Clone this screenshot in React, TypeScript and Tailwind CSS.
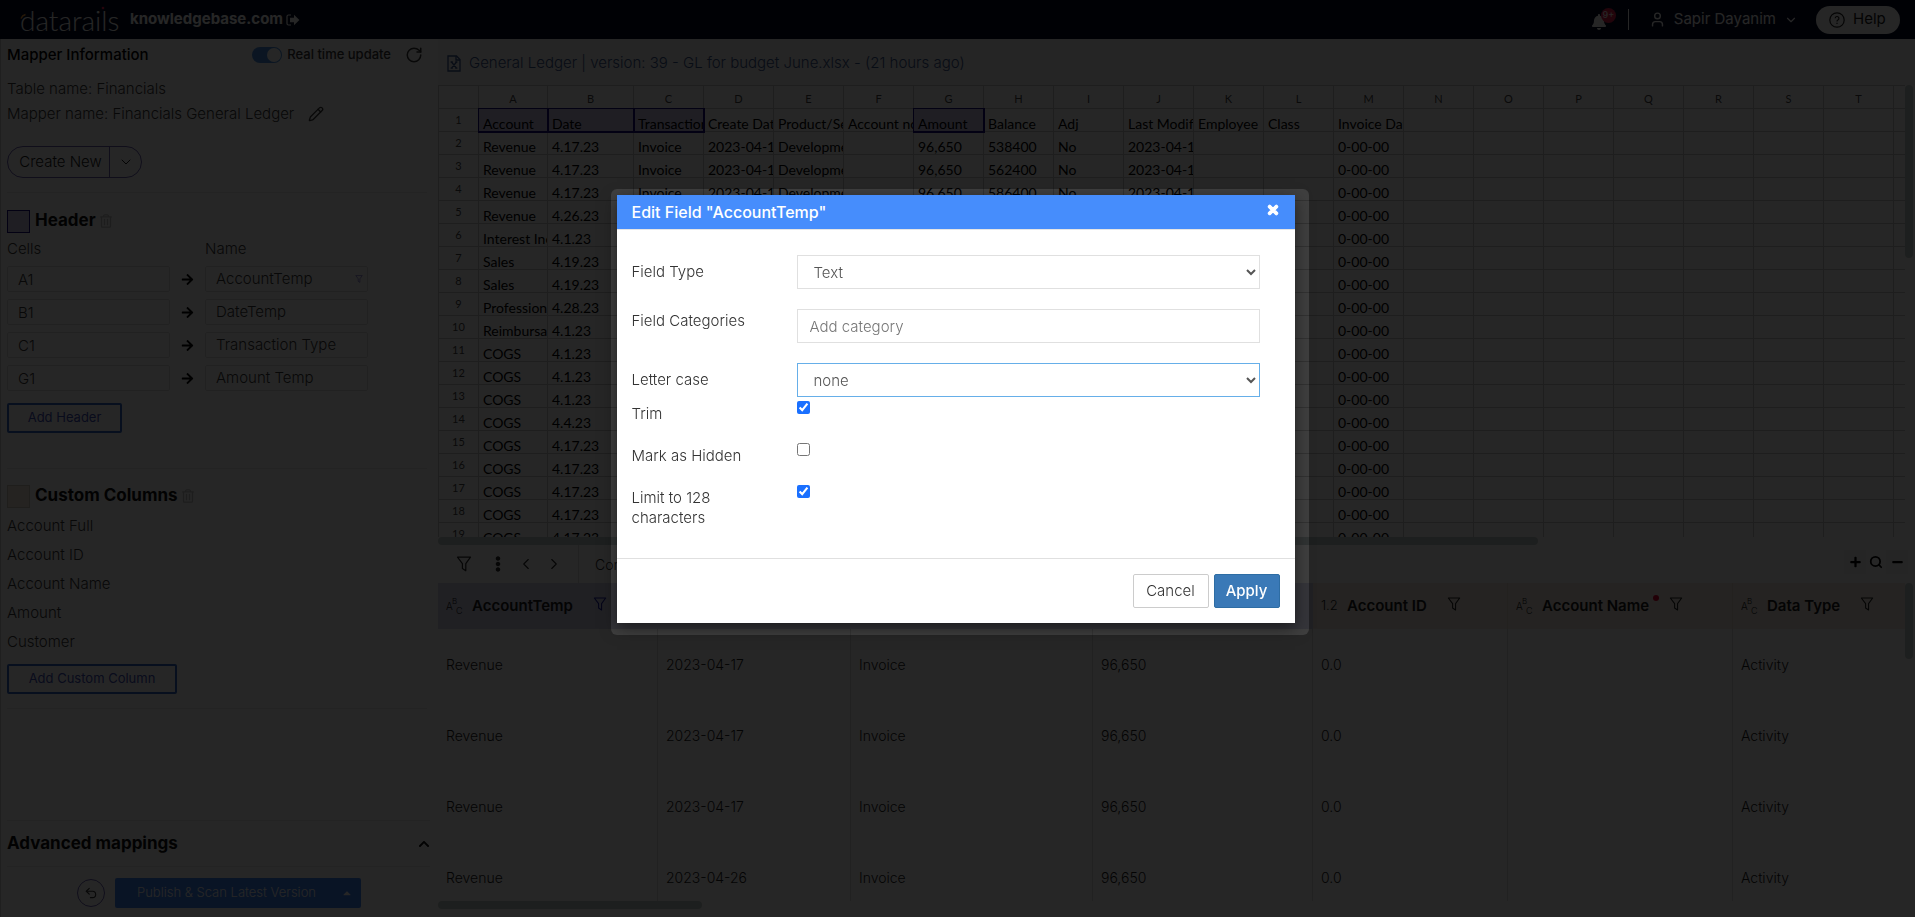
import React from "react";
import { ChevronDown, ChevronLeft, ChevronRight, Pencil, RotateCw, Search, Undo2, User } from "lucide-react";
import {
  FaArrowRight,
  FaBell,
  FaCaretUp,
  FaChevronUp,
  FaEllipsisV,
  FaMinus,
  FaPlus,
  FaRegTrashAlt,
  FaTimes,
} from "react-icons/fa";

const headerMappings = [
  { cell: "A1", name: "AccountTemp", filtered: true },
  { cell: "B1", name: "DateTemp" },
  { cell: "C1", name: "Transaction Type" },
  { cell: "G1", name: "Amount Temp" },
];

const customColumns = ["Account Full", "Account ID", "Account Name", "Amount", "Customer"];

const letters = "ABCDEFGHIJKLMNOPQRST".split("");
const selectedHeaders = ["A", "B", "C", "G"];

type SheetRow = Record<string, string>;

const invoice = (balance: string): SheetRow => ({
  A: "Revenue",
  B: "4.17.23",
  C: "Invoice",
  D: "2023-04-17",
  E: "Development",
  G: "96,650",
  H: balance,
  I: "No",
  J: "2023-04-17",
  M: "0-00-00",
});

const entry = (account: string, date: string): SheetRow => ({ A: account, B: date, M: "0-00-00" });

const sheetRows: SheetRow[] = [
  {
    A: "Account",
    B: "Date",
    C: "Transaction Type",
    D: "Create Date",
    E: "Product/Service",
    F: "Account no",
    G: "Amount",
    H: "Balance",
    I: "Adj",
    J: "Last Modified",
    K: "Employee",
    L: "Class",
    M: "Invoice Date",
  },
  invoice("538400"),
  invoice("562400"),
  invoice("586400"),
  entry("Revenue", "4.26.23"),
  entry("Interest Income", "4.1.23"),
  entry("Sales", "4.19.23"),
  entry("Sales", "4.19.23"),
  entry("Professional", "4.28.23"),
  entry("Reimbursable", "4.1.23"),
  entry("COGS", "4.1.23"),
  entry("COGS", "4.1.23"),
  entry("COGS", "4.1.23"),
  entry("COGS", "4.4.23"),
  entry("COGS", "4.17.23"),
  entry("COGS", "4.17.23"),
  entry("COGS", "4.17.23"),
  entry("COGS", "4.17.23"),
  entry("COGS", "4.17.23"),
];

const previewRows = [
  ["Revenue", "2023-04-17", "Invoice", "96,650", "0.0", "", "Activity"],
  ["Revenue", "2023-04-17", "Invoice", "96,650", "0.0", "", "Activity"],
  ["Revenue", "2023-04-17", "Invoice", "96,650", "0.0", "", "Activity"],
  ["Revenue", "2023-04-26", "Invoice", "96,650", "0.0", "", "Activity"],
];

function Funnel({ className }: { className: string }) {
  return (
    <svg viewBox="0 0 16 16" className={className} fill="none" stroke="currentColor" strokeWidth="1.2" strokeLinejoin="round" aria-hidden="true">
      <path d="M1.5 1.2h13L9.8 7.6v7.2L6.4 12.6v-5z" />
    </svg>
  );
}

function LeaveIcon() {
  return (
    <svg viewBox="0 0 14 12" className="h-3 w-3.5" aria-hidden="true">
      <path d="M5 1H2.5A1.5 1.5 0 0 0 1 2.5v7A1.5 1.5 0 0 0 2.5 11H5" fill="none" stroke="currentColor" strokeWidth="1.2" />
      <path d="M8 .8 13.4 6 8 11.2V8.200H4V3.800H8z" fill="currentColor" />
    </svg>
  );
}

function TextType() {
  return (
    <svg viewBox="0 0 18 18" className="h-[18px] w-[18px] shrink-0" fill="currentColor" fontFamily="Inter, sans-serif" fontWeight="300" aria-hidden="true">
      <text x="0" y="13" fontSize="10">A</text>
      <text x="6" y="7" fontSize="8">B</text>
      <text x="10" y="17" fontSize="9">C</text>
    </svg>
  );
}

function ExcelFile() {
  return (
    <svg viewBox="0 0 14 17" className="h-[17px] w-3.5" fill="none" stroke="currentColor" strokeWidth="1.3" aria-hidden="true">
      <path d="M1 1h8.5L13 4.5V16H1z" />
      <path d="M9 1v4h4" />
      <path d="M4.5 7 9.5 13.2M9.5 7 4.5 13.2M3.6 7h2.2M8.2 7h2.2M3.6 13.2h2.2M8.2 13.2h2.2" />
    </svg>
  );
}

function TopBar() {
  return (
    <header className="flex h-[39px] shrink-0 items-center bg-[#050b26] pr-[15px] pl-5 text-white">
      <a href="#" className="relative block w-[100px] font-[Lato,sans-serif] text-[28px] leading-[30px] font-light">
        datarails
        <svg viewBox="0 0 100 30" className="absolute top-0 left-0 h-[30px] w-[100px]" fill="none" aria-hidden="true">
          <path d="M1 13.5a7 7 0 0 1 4.500-4" stroke="#ffa033" strokeWidth="1.5" />
          <circle cx="83" cy="3" r="1.3" fill="#ff2050" />
        </svg>
      </a>
      <a href="#" className="ml-[10px] flex items-center gap-[3px] text-[15px] font-bold">
        knowledgebase.com
        <LeaveIcon />
      </a>
      <div className="ml-auto flex items-center">
        <button type="button" aria-label="Notifications" className="relative h-6 w-6">
          <FaBell className="mt-[5px] h-4 w-3.5" />
          <span className="absolute top-0 left-[9px] flex h-[15px] w-[15px] items-center justify-center rounded-full bg-[#e0204e] text-[9px] font-medium">9+</span>
        </button>
        <span className="mx-3 h-[21px] w-px bg-white" />
        <button type="button" className="ml-2 flex items-center text-[15px]">
          <User className="mr-2 h-[17px] w-[17px]" />
          Sapir Dayanim
          <ChevronDown className="ml-2 h-3.5 w-3.5" />
        </button>
        <button type="button" className="ml-[18px] flex h-7 w-[84px] items-center gap-2 rounded-full bg-white pl-[13px] text-[15px] text-[#202020]">
          <svg viewBox="0 0 16 16" className="h-4 w-4" fill="none" stroke="currentColor" strokeWidth="1.2" aria-hidden="true">
            <circle cx="8" cy="8" r="7.2" />
            <path d="M6.200 6.300a1.850 1.850 0 1 1 2.700 1.700c-.6.300-.9.600-.9 1.400M8 10.800v1.200" />
          </svg>
          Help
        </button>
      </div>
    </header>
  );
}

function SectionTitle({ title, swatch }: { title: string; swatch: string }) {
  return (
    <div className="flex h-6 items-center">
      <span className={`mr-[5px] h-[23px] w-[23px] border ${swatch}`} />
      <h2 className="text-[17px] font-bold text-[#101010]">{title}</h2>
      <button type="button" aria-label={`Delete ${title}`} className="ml-1 text-[#c4c4c4]">
        <FaRegTrashAlt className="h-3.5 w-3" />
      </button>
    </div>
  );
}

function Sidebar() {
  return (
    <aside className="flex w-[438px] shrink-0 flex-col border-l border-[#d0d0d0] pl-1.5 text-[15px] font-light text-[#383838]">
      <div className="flex h-8 items-center pr-[15px]">
        <h1 className="text-[15px] font-medium text-black">Mapper Information</h1>
        <label className="ml-auto flex items-center gap-[5px] text-[13px] font-medium">
          <input type="checkbox" role="switch" defaultChecked className="peer sr-only" />
          <span className="flex h-4 w-[30px] justify-end rounded-full bg-[#4a90e2] p-px">
            <span className="h-3.5 w-3.5 rounded-full bg-white" />
          </span>
          Real time update
        </label>
        <button type="button" aria-label="Refresh" className="ml-3.5">
          <RotateCw className="h-[18px] w-[18px]" />
        </button>
      </div>
      <p className="mt-[6px] leading-6">Table name: Financials</p>
      <p className="mt-px flex items-center leading-6">
        Mapper name: Financials General Ledger
        <button type="button" aria-label="Edit mapper name" className="ml-3.5">
          <Pencil className="h-4 w-4" />
        </button>
      </p>
      <div className="mt-5 flex h-8 w-[135px] rounded-full border border-[#6b5fb0] text-[#202020]">
        <button type="button" className="flex-1 border-r border-[#6b5fb0] pl-1 text-[15px]">Create New</button>
        <button type="button" aria-label="More create options" className="flex w-[31px] items-center justify-center">
          <ChevronDown className="h-4 w-4" strokeWidth={1.5} />
        </button>
      </div>
      <hr className="mt-[14px] mr-[11px] border-[#ececec]" />

      <div className="mt-4">
        <SectionTitle title="Header" swatch="border-[#1a0a80] bg-[#d0c8ec]" />
      </div>
      <div className="mt-1 flex leading-6">
        <span className="w-[198px]">Cells</span>
        <span>Name</span>
      </div>
      <div className="mt-[5px] flex flex-col gap-[7px]">
        {headerMappings.map((m) => (
          <div key={m.cell} className="flex items-center">
            <input aria-label={`Cell ${m.cell}`} defaultValue={m.cell} className="h-[26px] w-[163px] rounded-xs border border-[#dcdcdc] px-2.5" />
            <FaArrowRight className="mx-[11px] h-[13px] w-[13px] text-black" />
            <span className="flex h-[26px] w-[163px] items-center rounded-xs border border-[#dcdcdc] pr-1">
              <input aria-label={`Name for ${m.cell}`} defaultValue={m.name} className="w-full min-w-0 px-2.5" />
              {m.filtered && <Funnel className="h-2 w-2 shrink-0 text-[#5a4fc0]" />}
            </span>
          </div>
        ))}
      </div>
      <button type="button" className="mt-3 h-[30px] w-[115px] shrink-0 rounded-xs border-2 border-[#2f68c8] text-[13px] font-normal text-[#3f4fb8]">
        Add Header
      </button>
      <hr className="mt-[35px] mr-[11px] border-[#ececec]" />

      <div className="mt-[15px]">
        <SectionTitle title="Custom Columns" swatch="border-[#cfc6bc] bg-[#f3e6da]" />
      </div>
      <ul className="mt-[3px] leading-[29px]">
        {customColumns.map((c) => (
          <li key={c}>{c}</li>
        ))}
      </ul>
      <button type="button" className="mt-2 h-[30px] w-[170px] shrink-0 rounded-xs border-2 border-[#2f68c8] text-[13px] font-normal text-[#3f4fb8]">
        Add Custom Column
      </button>
      <hr className="mt-[14px] mr-[11px] border-[#ececec]" />

      <button type="button" className="mt-auto mr-2 flex h-[47px] shrink-0 items-center justify-between border-y border-[#ececec] text-[17px] font-bold text-[#101010]">
        Advanced mappings
        <FaChevronUp className="h-3 w-3" />
      </button>
      <div className="flex h-[50px] shrink-0 items-center pt-0.5 pl-[70px]">
        <button type="button" aria-label="Undo" className="flex h-7 w-7 items-center justify-center rounded-full border border-[#6b5fb0]">
          <Undo2 className="h-3.5 w-3.5" />
        </button>
        <button type="button" className="ml-2.5 flex h-[30px] w-[246px] items-center justify-between rounded-xs bg-[#3f86f8] pr-[9px] pl-[22px] text-[13px] font-light text-white">
          Publish &amp; Scan Latest Version
          <FaCaretUp className="h-3 w-2.5" />
        </button>
      </div>
    </aside>
  );
}

function Spreadsheet() {
  return (
    <div className="flex h-[460px] shrink-0">
      <div className="flex min-w-0 flex-1 flex-col">
        <div className="h-[452px] overflow-hidden">
          <table className="w-full table-fixed border-collapse font-[Lato,sans-serif] text-[14px] text-black">
            <colgroup>
              <col className="w-10" />
              {letters.map((l) => (
                <col key={l} className={l === "A" ? "w-[69px]" : l === "B" ? "w-[86px]" : "w-[70px]"} />
              ))}
              <col />
            </colgroup>
            <thead>
              <tr className="h-[23px] text-[11px] text-[#454545]">
                <th className="border border-[#c6c6c6] p-0" />
                {letters.map((l) => (
                  <th key={l} className="border border-[#c6c6c6] p-0 pt-1 leading-4 font-normal">{l}</th>
                ))}
                <th className="border border-r-0 border-[#c6c6c6] p-0" />
              </tr>
            </thead>
            <tbody>
              {sheetRows.map((row, i) => (
                <tr key={i} className="h-[23px]">
                  <th className="border border-[#c6c6c6] p-0 text-[11px] leading-4 font-normal text-[#454545]">{i + 1}</th>
                  {letters.map((l) => {
                    const marked = i === 0 && selectedHeaders.includes(l);
                    return (
                      <td
                        key={l}
                        className={
                          marked
                            ? "overflow-hidden border border-[#1a0a80] bg-[#d0c8ec] p-0 pl-1 align-bottom leading-[14px] whitespace-nowrap outline-1 outline-[#1a0a80]"
                            : "overflow-hidden border border-[#c6c6c6] p-0 pl-1 align-bottom leading-[14px] whitespace-nowrap"
                        }
                      >
                        {row[l]}
                      </td>
                    );
                  })}
                  <td className="border border-r-0 border-[#c6c6c6] p-0" />
                </tr>
              ))}
            </tbody>
          </table>
        </div>
        <div className="h-2 w-3/4 rounded-full bg-[#c4cfcc]" />
      </div>
      <div className="w-2.5">
        <div className="h-[173px] w-2 rounded-full bg-[#c4cfcc]" />
      </div>
    </div>
  );
}

function PreviewToolbar() {
  return (
    <div className="flex h-[38px] shrink-0 items-center pl-[18px] text-[#282828]">
      <button type="button" aria-label="Filter rows"><Funnel className="h-4 w-4" /></button>
      <button type="button" aria-label="More actions" className="ml-[18px]"><FaEllipsisV className="h-4 w-4" /></button>
      <button type="button" aria-label="Previous" className="ml-[11px]"><ChevronLeft className="h-[18px] w-[18px]" strokeWidth={1.5} /></button>
      <button type="button" aria-label="Next" className="ml-2.5"><ChevronRight className="h-[18px] w-[18px]" strokeWidth={1.5} /></button>
      <span className="ml-[15px] h-full w-px bg-[#dedede]" />
      <span className="ml-4 text-[14px] font-light">Con</span>
      <div className="mr-[7px] mb-1 ml-auto flex items-center text-black">
        <button type="button" aria-label="Zoom in" className="flex h-6 w-[22px] items-center justify-center bg-[#f6f6f6]"><FaPlus className="h-3 w-[11px]" /></button>
        <Search className="mx-[3px] h-3.5 w-3.5" strokeWidth={3} />
        <button type="button" aria-label="Zoom out" className="flex h-6 w-[22px] items-center justify-center bg-[#f6f6f6]"><FaMinus className="h-3 w-[11px]" /></button>
      </div>
    </div>
  );
}

function ColumnTitle({ name, numeric, required, active }: { name: string; numeric?: boolean; required?: boolean; active?: boolean }) {
  return (
    <div className="flex items-center">
      {numeric ? <span className="w-[18px] text-[13px] font-light">1.2</span> : <TextType />}
      <span className="relative ml-2 text-[15px] font-semibold">
        {name}
        {required && <span className="absolute top-0 -right-2.5 h-1.5 w-1.5 rounded-full bg-[#e00030]" />}
      </span>
      <button type="button" aria-label={`Filter ${name}`} className={active ? "mb-1 ml-5 text-[#1a20a0]" : "mb-1 ml-5"}>
        <Funnel className="h-3.5 w-3.5" />
      </button>
    </div>
  );
}

function Preview() {
  const mapped = "bg-[#d4d4ec] p-0";
  const custom = "border-r border-[#e6dbd0] bg-[#f4ebe2] p-0 text-left";
  return (
    <div className="flex min-h-0 flex-1">
      <div className="flex min-w-0 flex-1 flex-col">
        <div className="min-h-0 flex-1 overflow-hidden">
          <table className="w-full table-fixed border-separate border-spacing-0 text-[14px] font-light text-[#202020]">
            <colgroup>
              <col className="w-[220px]" />
              <col className="w-[193px]" />
              <col className="w-[242px]" />
              <col className="w-[220px]" />
              <col className="w-[195px]" />
              <col className="w-[225px]" />
              <col />
            </colgroup>
            <thead>
              <tr className="h-[46px]">
                <th className="bg-[#d4d4ec] p-0 pl-2 text-left"><ColumnTitle name="AccountTemp" active /></th>
                <th className={mapped} />
                <th className={mapped} />
                <th className={mapped} />
                <th className={`${custom} pl-2`}><ColumnTitle name="Account ID" numeric /></th>
                <th className={`${custom} pl-2`}><ColumnTitle name="Account Name" required /></th>
                <th className="bg-[#f4ebe2] p-0 pl-2 text-left"><ColumnTitle name="Data Type" /></th>
              </tr>
            </thead>
            <tbody>
              {previewRows.map((row, i) => (
                <tr key={i} className="h-[71px]">
                  {row.map((v, j) => (
                    <td key={j} className={j === 6 ? "p-0 pl-2" : "border-r border-[#dcdcdc] p-0 pl-2"}>{v}</td>
                  ))}
                </tr>
              ))}
            </tbody>
          </table>
        </div>
        <div className="mb-2 h-2 w-[264px] rounded-full bg-[#c4cfcc]" />
      </div>
      <div className="w-2.5">
        <div className="h-[76px] w-2 rounded-full bg-[#c4cfcc]" />
      </div>
    </div>
  );
}

function EditFieldDialog() {
  const label = "w-[165px] shrink-0 pr-10 pt-[7px] leading-5";
  const control = "h-[34px] min-w-0 flex-1 border border-[#e0e0e0] bg-white px-3 text-[15px] font-light text-[#555555] outline-none";
  return (
    <div className="absolute inset-0 flex items-start justify-center bg-black/85 pt-[189px] pl-1">
      <div className="w-[698px] rounded-md pt-1.5 pr-3.5 pb-3 pl-1.5 backdrop-brightness-[1.65]">
        <div role="dialog" aria-modal="true" aria-labelledby="dialog-title" className="bg-white text-[15px] font-light text-[#333333] shadow-[0_5px_15px_rgba(0,0,0,0.5)]">
          <div className="flex h-[35px] items-center justify-between border-b border-[#e5e5e5] bg-[#468dfc] pr-4 pl-[15px] text-white">
            <h2 id="dialog-title" className="text-base font-medium">Edit Field "AccountTemp"</h2>
            <button type="button" aria-label="Close" className="mb-1"><FaTimes className="h-3.5 w-3 stroke-white stroke-[40]" /></button>
          </div>
          <form className="pt-[25px] pr-[35px] pb-[15px] pl-[15px]">
            <div className="mb-5 flex">
              <label htmlFor="field-type" className={label}>Field Type</label>
              <select id="field-type" className={control}>
                <option>Text</option>
              </select>
            </div>
            <div className="mb-5 flex">
              <label htmlFor="field-categories" className="w-[165px] shrink-0 pt-0.5 leading-5">Field Categories</label>
              <input id="field-categories" placeholder="Add category" className={`${control} placeholder:text-[#777777]`} />
            </div>
            <div className="flex">
              <label htmlFor="letter-case" className={label}>Letter case</label>
              <select id="letter-case" className="h-[34px] min-w-0 flex-1 border border-[#66afe9] bg-white px-3 text-[15px] font-light text-[#555555] outline-none">
                <option>none</option>
              </select>
            </div>
            <div className="mb-[15px] flex items-start">
              <label htmlFor="trim" className={label}>Trim</label>
              <input id="trim" type="checkbox" defaultChecked className="mt-1 h-[13px] w-[13px] accent-[#1a70ff]" />
            </div>
            <div className="mb-[15px] flex items-start">
              <label htmlFor="hidden-field" className="w-[165px] shrink-0 pt-[7px] leading-5">Mark as Hidden</label>
              <input id="hidden-field" type="checkbox" className="mt-1 h-[13px] w-[13px]" />
            </div>
            <div className="mb-[15px] flex items-start">
              <label htmlFor="limit" className={label}>Limit to 128 characters</label>
              <input id="limit" type="checkbox" defaultChecked className="mt-1 h-[13px] w-[13px] accent-[#1a70ff]" />
            </div>
          </form>
          <div className="flex justify-end gap-[5px] border-t border-[#e0e0e0] p-[15px]">
            <button type="button" className="h-[34px] w-[76px] rounded-xs border border-[#cccccc] text-[15px]">Cancel</button>
            <button type="button" className="h-[34px] w-[66px] rounded-xs border border-[#2e6da4] bg-[#3a79b7] text-[15px] font-medium text-white">Apply</button>
          </div>
        </div>
      </div>
    </div>
  );
}

export default function App() {
  return (
    <div className="relative flex h-screen flex-col overflow-hidden bg-white font-[Inter,sans-serif]">
      <TopBar />
      <div className="flex min-h-0 flex-1">
        <Sidebar />
        <main className="flex min-w-0 flex-1 flex-col">
          <div className="flex h-[46px] shrink-0 items-center gap-2 bg-[#f5f5f5] pt-0.5 pl-[9px] text-[15px] font-light text-[#3a568e]">
            <ExcelFile />
            <span>General Ledger | version: 39 - GL for budget June.xlsx - (21 hours ago)</span>
          </div>
          <Spreadsheet />
          <PreviewToolbar />
          <Preview />
        </main>
      </div>
      <EditFieldDialog />
    </div>
  );
}
